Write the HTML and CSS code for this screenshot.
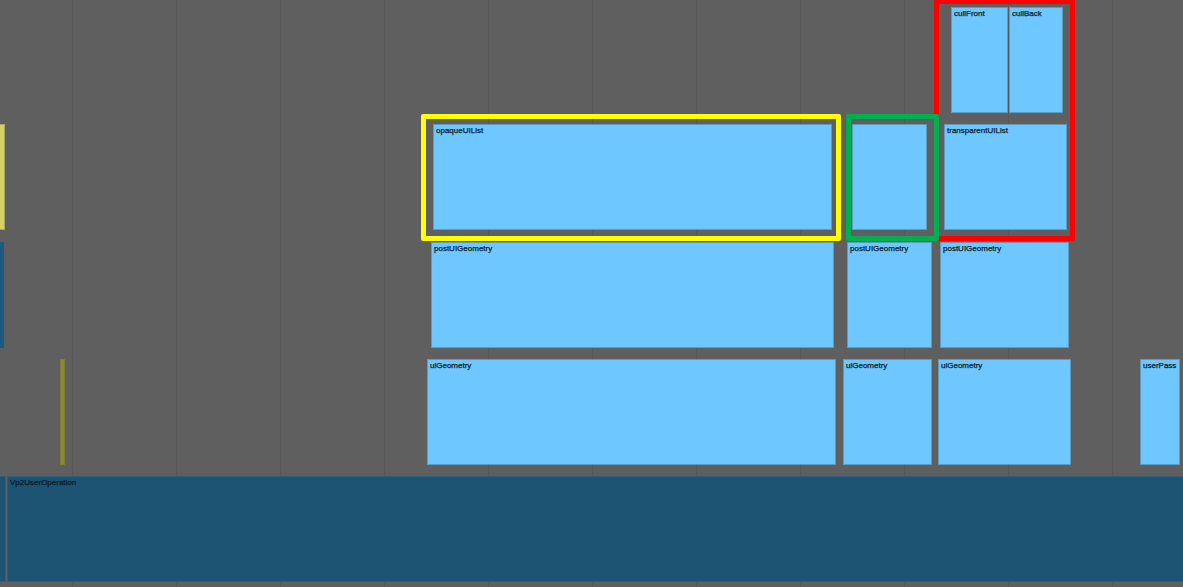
FILE: index.html
```html
<!DOCTYPE html>
<html>
<head>
<meta charset="utf-8">
<title>Profiler timeline</title>
<link rel="stylesheet" href="styles.css">
</head>
<body>
<div class="canvas">
  <div class="tracks">
    <div class="track">
      <div class="bar" style="left:951px;width:57px"><span class="label">cullFront</span></div>
      <div class="bar" style="left:1009px;width:54px"><span class="label">cullBack</span></div>
    </div>
    <div class="track t1">
      <div class="bar bar-olive-light" style="left:-1px;width:6px"></div>
      <div class="bar" style="left:433px;width:399px"><span class="label">opaqueUIList</span></div>
      <div class="bar" style="left:852px;width:75px"></div>
      <div class="bar" style="left:944px;width:123px"><span class="label">transparentUIList</span></div>
    </div>
    <div class="track t2">
      <div class="bar bar-dark bar-side" style="left:0;width:4px"></div>
      <div class="bar" style="left:431px;width:403px"><span class="label">postUIGeometry</span></div>
      <div class="bar" style="left:847px;width:85px"><span class="label">postUIGeometry</span></div>
      <div class="bar" style="left:940px;width:129px"><span class="label">postUIGeometry</span></div>
    </div>
    <div class="track t3">
      <div class="bar bar-olive" style="left:60px;width:5px"></div>
      <div class="bar" style="left:427px;width:409px"><span class="label">uiGeometry</span></div>
      <div class="bar" style="left:843px;width:89px"><span class="label">uiGeometry</span></div>
      <div class="bar" style="left:938px;width:133px"><span class="label">uiGeometry</span></div>
      <div class="bar" style="left:1140px;width:40px"><span class="label">userPass</span></div>
    </div>
    <div class="track t4">
      <div class="bar bar-dark" style="left:-2px;width:8px"></div>
      <div class="bar bar-dark" style="left:7px;width:1190px"><span class="label">Vp2UserOperation</span></div>
    </div>
  </div>

  <div class="highlight hl-red"></div>
  <div class="highlight hl-green"></div>
  <div class="highlight hl-yellow"></div>
</div>
</body>
</html>
```

FILE: styles.css
```css
html, body {
  margin: 0;
  padding: 0;
  background: #5f5f5f;
  overflow: hidden;
}

.canvas {
  position: relative;
  width: 1183px;
  height: 587px;
  overflow: hidden;
  background-color: #5f5f5f;
  background-image: repeating-linear-gradient(to right, transparent 0 103px, #575757 103px 104px);
  background-position: -31px 0;
  font-family: "Liberation Sans", Arial, sans-serif;
  font-size: 8px;
  color: #0c1b28;
}

.tracks {
  display: flex;
  flex-direction: column;
  gap: 11px;
  padding-top: 7px;
}

.track {
  position: relative;
  height: 106px;
}

.track.t2 {
  margin-top: 1px;
}

.bar {
  position: absolute;
  top: 0;
  bottom: 0;
  box-sizing: border-box;
  background: #6ec8ff;
  border: 1px solid #5c9ac0;
  overflow: hidden;
  white-space: nowrap;
}

.bar-dark {
  background: #1d5373;
  border-color: #2a5f7e;
}

.bar-side {
  background: #1d5a80;
  border: none;
}

.bar-olive {
  background: #8a8a30;
  border-color: #7d7d33;
}

.bar-olive-light {
  background: #d2d266;
  border-color: #a9a95a;
}

.label {
  display: block;
  padding: 1px 2px 0;
  line-height: 10px;
  -webkit-text-stroke: 0.25px #0c1b28;
}

.highlight {
  position: absolute;
  box-sizing: border-box;
  border-style: solid;
  border-width: 5px;
  border-radius: 2px;
  pointer-events: none;
}

.hl-yellow {
  left: 421px;
  top: 114px;
  width: 420px;
  height: 127px;
  border-color: #ffff00;
}

.hl-green {
  left: 846px;
  top: 114px;
  width: 93px;
  height: 127px;
  border-color: #00b050;
}

.hl-red {
  left: 934px;
  top: -1px;
  width: 141px;
  height: 242px;
  border-color: #ff0000;
}
```
